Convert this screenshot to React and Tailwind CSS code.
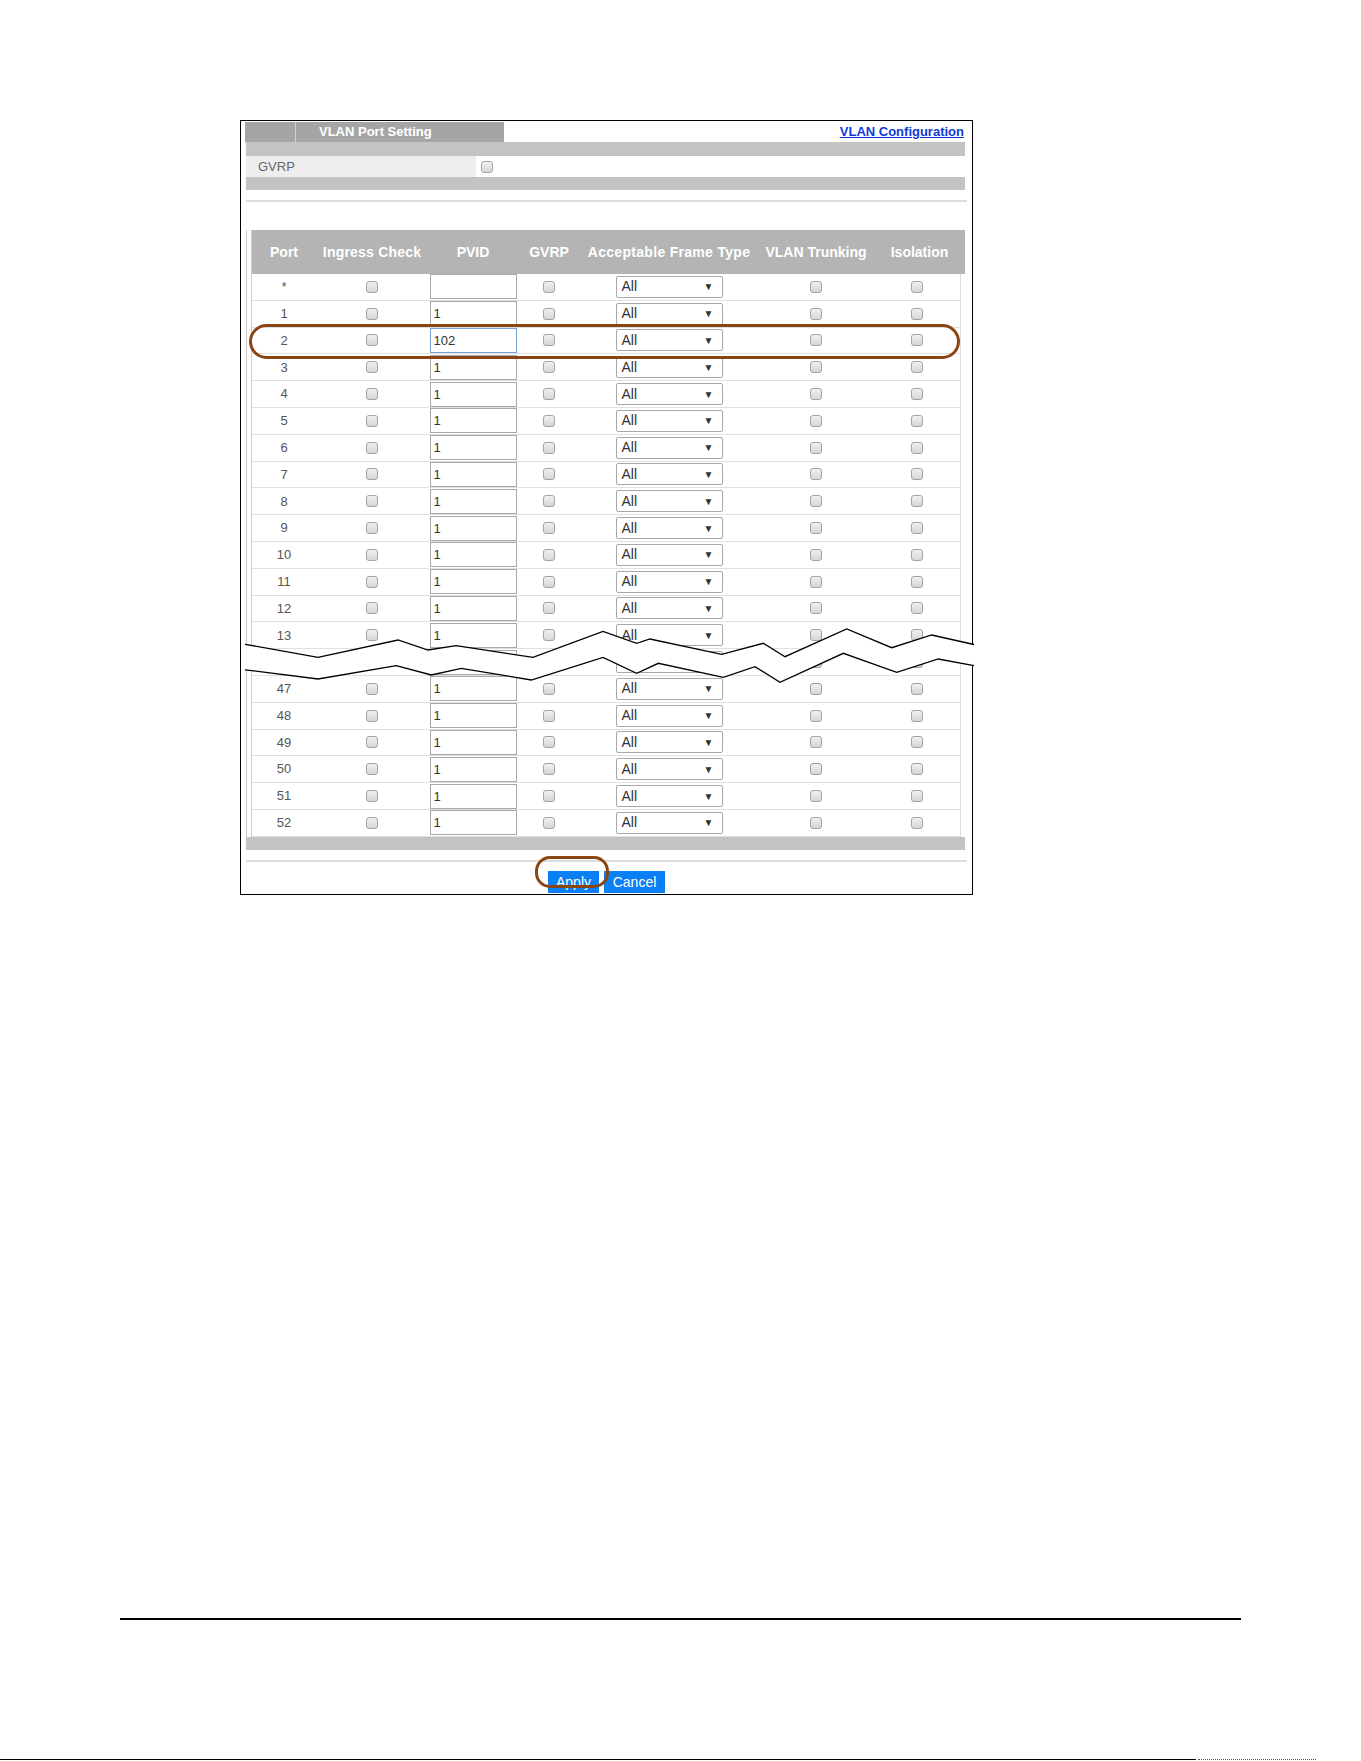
import React from "react";

const ports = ["*", "1", "2", "3", "4", "5", "6", "7", "8", "9", "10", "11", "12", "13", "14", "47", "48", "49", "50", "51", "52"];

const cols = "grid grid-cols-[64px_112px_90px_62px_178px_116px_1fr]";

// upper and lower edges of the torn strip between port 13 and port 47
const tearTop = "7,24.3 80,37.3 160,20 190,30 218,25.7 295,37.3 365,11.5 398.7,23.3 412,19 483.7,34.3 525.3,23.3 547,36.7 608.7,9 653.7,27.7 693.7,15 736,24.5";
const tearBottom = "7,49.8 80,59 158.3,45.7 193.3,55 223.3,48.3 293.3,60 365,37.5 398.7,53.3 420.3,43.3 485.3,57.3 517,46.7 542,62.3 605.3,33.3 658.7,52.3 700.3,39 736,45.7";

function Box() {
	return (
		<span className="block w-[12px] h-[12px] rounded-[3px] border border-[#a3a3a3] bg-gradient-to-b from-[#f0f0f0] to-[#d6d6d6]" />
	);
}

function FrameSelect() {
	return (
		<div className="w-[107px] h-[22px] border border-[#a8a8a8] rounded-[2px] bg-white flex items-center justify-between pl-[5px] pr-[8px]">
			<span className="text-[14px] text-[#333]">All</span>
			<span className="text-[10px] text-[#333]">▼</span>
		</div>
	);
}

function PortRow({ port }) {
	const focused = port === "2";
	const pvid = port === "*" ? "" : focused ? "102" : "1";
	return (
		<div className={`${cols} h-[26.8px] border-b border-[#e0e0e0] items-center`}>
			<div className="text-center text-[13px] text-[#555]">{port}</div>
			<div className="flex justify-center"><Box /></div>
			<div className="flex justify-center">
				<div
					className={`w-[87px] h-[25px] border bg-white pl-[3px] text-[13px] leading-[23px] text-[#333] ${
						focused ? "border-[#7aa3d6]" : "border-[#a9a9a9]"
					}`}>
					{pvid}
				</div>
			</div>
			<div className="flex justify-center"><Box /></div>
			<div className="flex justify-center"><FrameSelect /></div>
			<div className="flex justify-center"><Box /></div>
			<div className="flex justify-center"><Box /></div>
		</div>
	);
}

export default function App() {
	return (
		<div className="relative w-[1361px] h-[1761px] bg-white flex flex-col font-['Liberation_Sans',Arial,sans-serif] overflow-hidden">
			<section className="relative ml-[240px] mt-[120px] w-[733px] h-[775px] border border-black overflow-hidden shrink-0">
				<div className="flex items-center justify-between pt-[1px] pl-[4px] pr-[8px]">
					<div className="flex w-[259px] h-[20px] bg-[#a5a5a5]">
						<div className="w-[51px] border-r border-[#cfcfcf]" />
						<span className="pl-[23px] text-[13px] leading-[20px] font-bold text-white">VLAN Port Setting</span>
					</div>
					<a href="#" className="text-[13px] font-bold text-[#1238d8] underline">VLAN Configuration</a>
				</div>

				<div className="ml-[5px] mr-[7px]">
					<div className="h-[14px] bg-[#c3c3c3]" />
					<div className="flex h-[21px] items-center">
						<div className="w-[230px] h-full bg-[#eeeeee] pl-[12px] text-[13px] leading-[21px] text-[#666]">GVRP</div>
						<div className="ml-[5px]"><Box /></div>
					</div>
					<div className="h-[13px] bg-[#c3c3c3]" />
				</div>
				<div className="mt-[10px] ml-[5px] mr-[5px] h-[2px] bg-[#dddddd]" />

				<div className="mt-[28px] ml-[5px] mr-[7px] border-l border-[#cccccc] pl-[4px]">
					<div className="border-l border-[#cccccc]">
						<div className={`${cols} h-[44px] bg-[#b4b4b4] items-center text-[14px] font-bold text-white text-center whitespace-nowrap`}>
							<div>Port</div>
							<div className="tracking-[0.2px]">Ingress Check</div>
							<div>PVID</div>
							<div>GVRP</div>
							<div className="tracking-[0.3px]">Acceptable Frame Type</div>
							<div>VLAN Trunking</div>
							<div>Isolation</div>
						</div>
						<div className="mr-[4px] border-r border-[#e0e0e0]">
							{ports.map((p) => (
								<PortRow key={p} port={p} />
							))}
						</div>
					</div>
				</div>
				<div className="ml-[5px] mr-[7px] h-[13px] bg-[#c3c3c3]" />
				<div className="mt-[10px] ml-[5px] mr-[5px] h-[2px] bg-[#dddddd]" />

				<div className="mt-[9px] flex justify-center gap-[5px]">
					<button className="w-[51px] h-[22px] bg-[#0b80f5] text-white text-[14px] leading-[22px]">Apply</button>
					<button className="w-[61px] h-[22px] bg-[#0b80f5] text-white text-[14px] leading-[22px]">Cancel</button>
				</div>

				{/* callouts */}
				<div className="absolute left-[8px] top-[203px] w-[711px] h-[35px] rounded-[18px] border-[3px] border-[#8b4513]" />
				<div className="absolute left-[294px] top-[735px] w-[74px] h-[32px] rounded-[15px] border-[3px] border-[#8b4513]" />
			</section>

			<svg className="absolute left-[238px] top-[620px] w-[740px] h-[70px]" viewBox="0 0 740 70">
				<polygon
					points={`${tearTop} ${tearBottom.split(" ").reverse().join(" ")}`}
					fill="white"
				/>
				<polyline points={tearTop} fill="none" stroke="black" strokeWidth="1.3" />
				<polyline points={tearBottom} fill="none" stroke="black" strokeWidth="1.3" />
			</svg>

			<div className="mt-[723px] ml-[120px] w-[1121px] h-[2px] bg-black shrink-0" />
			<div className="mt-[139px] flex items-center shrink-0">
				<div className="w-[1196px] h-[1px] bg-black" />
				<div className="ml-[2px] w-[118px] h-[1px] border-t border-dotted border-[#555]" />
			</div>
		</div>
	);
}
